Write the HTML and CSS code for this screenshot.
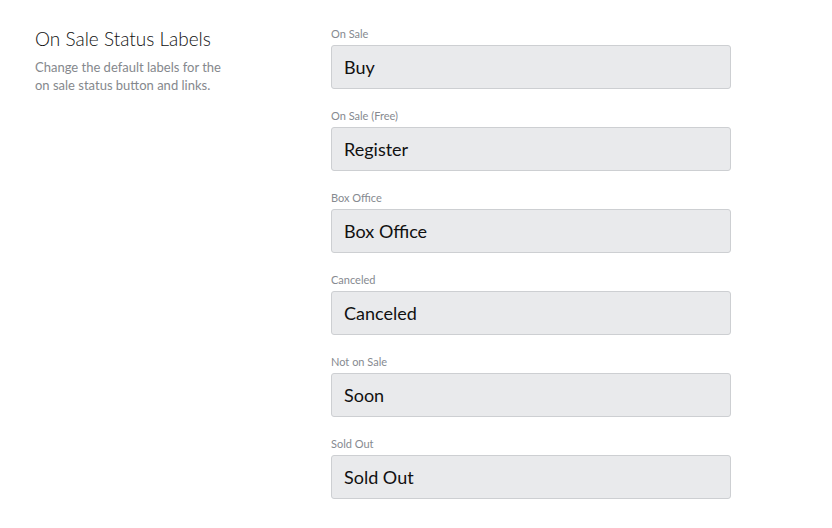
FILE: index.html
```html
<!DOCTYPE html>
<html lang="en">
<head>
  <meta charset="UTF-8">
  <title>On Sale Status Labels</title>
  <link rel="stylesheet" href="styles.css">
</head>
<body>
  <section class="settings-section">
    <div class="section-info">
      <h2 class="section-title">On Sale Status Labels</h2>
      <p class="section-desc">Change the default labels for the on sale status button and links.</p>
    </div>
    <div class="section-fields">
      <div class="field">
        <label class="field-label">On Sale</label>
        <input class="field-input" type="text" value="Buy">
      </div>
      <div class="field">
        <label class="field-label">On Sale (Free)</label>
        <input class="field-input" type="text" value="Register">
      </div>
      <div class="field">
        <label class="field-label">Box Office</label>
        <input class="field-input" type="text" value="Box Office">
      </div>
      <div class="field">
        <label class="field-label">Canceled</label>
        <input class="field-input" type="text" value="Canceled">
      </div>
      <div class="field">
        <label class="field-label">Not on Sale</label>
        <input class="field-input" type="text" value="Soon">
      </div>
      <div class="field">
        <label class="field-label">Sold Out</label>
        <input class="field-input" type="text" value="Sold Out">
      </div>
    </div>
  </section>
</body>
</html>
```

FILE: styles.css
```css
body {
  margin: 0;
  background-color: #fff;
  font-family: 'Lato', sans-serif;
  color: #1d1d21;
}

.settings-section {
  display: grid;
  grid-template-columns: 296px 400px;
  padding: 27px 35px 0;
}

.section-title {
  margin: 0;
  font-size: 19px;
  font-weight: 300;
  line-height: 24px;
  color: #111;
}

.section-desc {
  margin: 7px 0 0;
  width: 200px;
  font-size: 13px;
  line-height: 18px;
  color: #85888d;
}

.section-fields {
  display: flex;
  flex-direction: column;
  gap: 20px;
}

.field {
  display: flex;
  flex-direction: column;
}

.field-label {
  font-size: 11px;
  line-height: 14px;
  color: #868a90;
  margin-bottom: 4px;
}

.field-input {
  box-sizing: border-box;
  width: 400px;
  height: 44px;
  padding: 0 12px;
  border: 1px solid #cdcfd2;
  border-radius: 3px;
  background-color: #e9eaec;
  font-family: 'Lato', sans-serif;
  font-size: 18px;
  color: #111;
}
```
